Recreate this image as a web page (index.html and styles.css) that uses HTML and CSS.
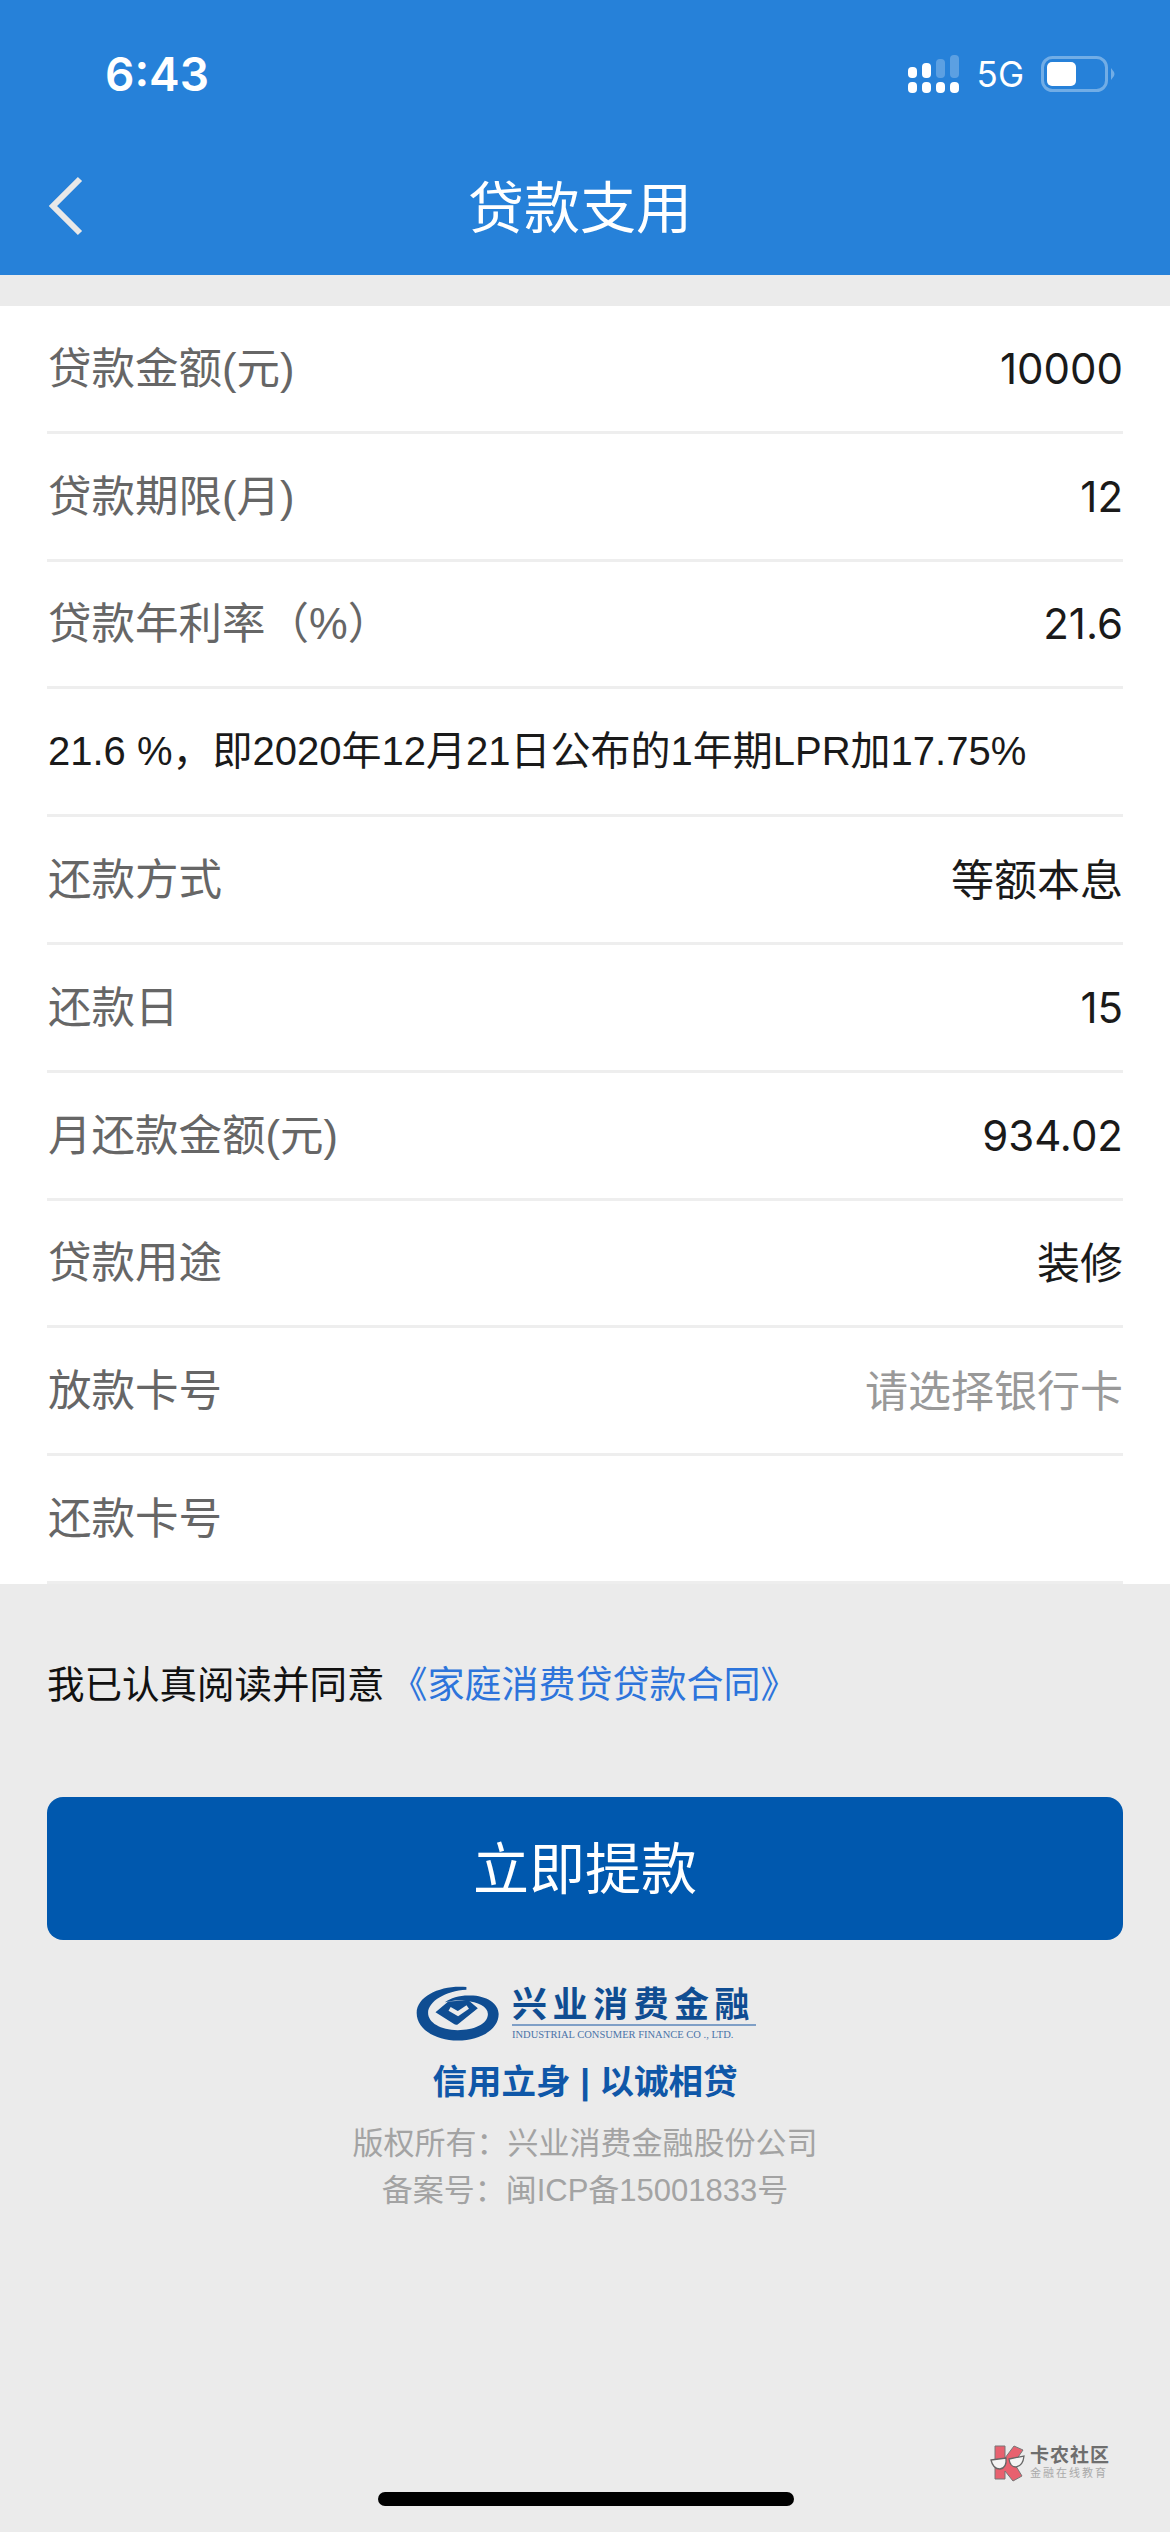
FILE: index.html
```html
<!DOCTYPE html>
<html lang="zh-CN">
<head>
    <meta charset="UTF-8">
    <title>贷款支用</title>
    <link rel="stylesheet" href="styles.css">
</head>
<body>
    <div class="page">
        <div class="header">
            <div class="status-bar">
                <span class="time">6:43</span>
                <div class="status-icons">
                    <svg class="signal" width="52" height="38" viewBox="0 0 52 38">
                        <rect x="0" y="12" width="9" height="11" rx="4" fill="#fff"/>
                        <rect x="14" y="8" width="9" height="15" rx="4" fill="#fff"/>
                        <rect x="28" y="4" width="9" height="19" rx="4" fill="#fff" opacity="0.25"/>
                        <rect x="42" y="0" width="9" height="23" rx="4" fill="#fff" opacity="0.25"/>
                        <rect x="0" y="27" width="9" height="11" rx="4" fill="#fff"/>
                        <rect x="14" y="27" width="9" height="11" rx="4" fill="#fff"/>
                        <rect x="28" y="27" width="9" height="11" rx="4" fill="#fff"/>
                        <rect x="42" y="27" width="9" height="11" rx="4" fill="#fff"/>
                    </svg>
                    <span class="network">5G</span>
                    <svg class="battery" width="74" height="36" viewBox="0 0 74 36">
                        <rect x="1.5" y="1.5" width="64" height="33" rx="10" fill="none" stroke="#fff" stroke-opacity="0.35" stroke-width="3"/>
                        <rect x="6" y="6" width="29" height="24" rx="5" fill="#fff"/>
                        <path d="M70 12 L73 16 Q74 18 73 20 L70 24 Z" fill="#fff" fill-opacity="0.35"/>
                    </svg>
                </div>
            </div>
            <div class="nav-bar">
                <svg class="back" width="36" height="60" viewBox="0 0 36 60">
                    <path d="M33 3 L6 30 L33 57" fill="none" stroke="#e8e8e8" stroke-width="6"/>
                </svg>
                <h1>贷款支用</h1>
            </div>
        </div>

        <div class="form-list">
            <div class="form-row"><span class="label">贷款金额(元)</span><span class="num">10000</span></div>
            <div class="form-row"><span class="label">贷款期限(月)</span><span class="num">12</span></div>
            <div class="form-row"><span class="label">贷款年利率（%）</span><span class="num">21.6</span></div>
            <div class="form-row"><span class="note">21.6 %，即2020年12月21日公布的1年期LPR加17.75%</span></div>
            <div class="form-row"><span class="label">还款方式</span><span class="value">等额本息</span></div>
            <div class="form-row"><span class="label">还款日</span><span class="num">15</span></div>
            <div class="form-row"><span class="label">月还款金额(元)</span><span class="num">934.02</span></div>
            <div class="form-row"><span class="label">贷款用途</span><span class="value">装修</span></div>
            <div class="form-row"><span class="label">放款卡号</span><span class="placeholder">请选择银行卡</span></div>
            <div class="form-row"><span class="label">还款卡号</span></div>
        </div>

        <p class="agreement">我已认真阅读并同意<a class="contract">《家庭消费贷贷款合同》</a></p>

        <button class="submit" type="button"><span>立即提款</span></button>

        <div class="footer">
            <div class="brand">
                <svg class="emblem" width="84" height="56" viewBox="22 22 250 166">
                    <path d="M172 25 C100 18 24 50 24 102 C24 150 80 184 146 184 C215 184 268 150 268 105 C268 72 228 48 178 50 C150 50 125 58 108 70 C130 64 150 64 170 66 C205 68 236 82 236 105 C236 135 195 153 146 153 C95 153 58 130 58 102 C58 68 110 36 172 33 Z" fill="#0f4d92"/>
                    <path d="M80 100 L118 68 L178 64 L206 88 L146 136 Q140 138 134 134 Z" fill="#0f4d92"/>
                    <path d="M122 90 L147 104 L176 84" fill="none" stroke="#ebebeb" stroke-width="13"/>
                </svg>
                <div class="brand-text">
                    <div class="brand-name">兴业消费金融</div>
                    <div class="brand-en">INDUSTRIAL CONSUMER FINANCE CO ., LTD.</div>
                </div>
            </div>
            <div class="slogan">信用立身 | 以诚相贷</div>
            <div class="copyright">版权所有：兴业消费金融股份公司</div>
            <div class="copyright">备案号：闽ICP备15001833号</div>
        </div>

        <div class="watermark">
            <svg width="36" height="38" viewBox="0 0 36 38">
                <path d="M5 2 L15 2 L15 14 L24 2 L33 6 L24 19 L32 32 L23 37 L15 27 L15 35 L5 35 Z" fill="#e8616f" stroke="#777" stroke-width="1"/>
                <path d="M1 16 L16 14 Q17 24 10 25 Q3 25 1 16 Z" fill="#f4f4f4" stroke="#666" stroke-width="1.3"/>
                <path d="M19 15 L34 12 Q33 22 26 23 Q20 23 19 15 Z" fill="#f4f4f4" stroke="#666" stroke-width="1.3"/>
            </svg>
            <div>
                <div class="wm-title">卡农社区</div>
                <div class="wm-sub">金融在线教育</div>
            </div>
        </div>
        <div class="home-indicator"></div>
    </div>
</body>
</html>
```

FILE: styles.css
```css
* {
    box-sizing: border-box;
}
body {
    margin: 0;
    background-color: #ebebeb;
    font-family: "Liberation Sans", "Noto Sans CJK SC", sans-serif;
}
.page {
    position: relative;
    width: 1170px;
    height: 2532px;
    overflow: hidden;
    background-color: #ebebeb;
}
.header {
    height: 275px;
    background-color: #2681d9;
    color: #fff;
}
.status-bar {
    display: flex;
    justify-content: space-between;
    align-items: center;
    height: 148px;
    padding: 0 55px 0 105px;
}
.time {
    font-family: Inter, sans-serif;
    font-size: 46px;
    font-weight: 600;
}
.status-icons {
    display: flex;
    align-items: center;
    gap: 17px;
}
.network {
    font-family: Inter, sans-serif;
    font-size: 35px;
}
.nav-bar {
    position: relative;
    display: flex;
    justify-content: center;
    align-items: center;
    height: 116px;
    padding: 0 10px 6px 0;
}
.nav-bar h1 {
    margin: 0;
    font-size: 56px;
    font-weight: 400;
}
.back {
    position: absolute;
    left: 47px;
    top: 28px;
}
.form-list {
    margin-top: 31px;
    padding: 0 47px;
    background-color: #fff;
}
.form-row {
    display: flex;
    justify-content: space-between;
    align-items: center;
    height: 127.8px;
    border-bottom: 3px solid #eeeeee;
    font-size: 43px;
}
.label {
    padding: 0 0 6px 1px;
    color: #666;
    font-size: 43.5px;
}
.value {
    padding-bottom: 6px;
    color: #1a1a1a;
}
.num {
    color: #1a1a1a;
    font-family: Inter, sans-serif;
    font-size: 42px;
}
.note {
    padding: 0 0 8px 1px;
    color: #1a1a1a;
    font-size: 40px;
}
.placeholder {
    padding-bottom: 6px;
    color: #999;
}
.agreement {
    margin: 73px 0 0;
    padding: 0 47px;
    font-size: 37.5px;
    line-height: 56px;
    color: #111;
}
.contract {
    margin-left: 6px;
    color: #2d74db;
    font-size: 37px;
}
.submit {
    display: block;
    width: 1076px;
    height: 143px;
    margin: 83px 47px 0;
    padding: 0 0 8px;
    border: none;
    border-radius: 16px;
    background-color: #0058ae;
    color: #fff;
    font-family: inherit;
    font-size: 56px;
}
.footer {
    display: flex;
    flex-direction: column;
    align-items: center;
    margin-top: 46px;
}
.brand {
    display: flex;
    align-items: center;
    gap: 12px;
    margin-left: 2px;
}
.brand-name {
    width: 244px;
    height: 38px;
    border-bottom: 2px solid #7f9fc6;
    color: #0f4d92;
    font-size: 35px;
    font-weight: 700;
    line-height: 34px;
    letter-spacing: 5.5px;
    white-space: nowrap;
}
.brand-en {
    margin-top: 3px;
    color: #4a73a8;
    font-family: "Liberation Serif", serif;
    font-size: 10.5px;
    white-space: nowrap;
}
.slogan {
    margin-top: 17px;
    color: #0f57a8;
    font-size: 34.5px;
    font-weight: 700;
    line-height: 46px;
}
.copyright {
    color: #a3a3a3;
    font-size: 31px;
    line-height: 47px;
}
.slogan + .copyright {
    margin-top: 15px;
}
.watermark {
    position: absolute;
    left: 990px;
    top: 2444px;
    display: flex;
    gap: 4px;
}
.wm-title {
    color: #6e6e6e;
    font-size: 19px;
    font-weight: 700;
    line-height: 23px;
    letter-spacing: 1px;
}
.wm-sub {
    color: #aaa;
    font-size: 11px;
    line-height: 13px;
    letter-spacing: 2px;
}
.home-indicator {
    position: absolute;
    left: 378px;
    top: 2492px;
    width: 416px;
    height: 14px;
    border-radius: 7px;
    background-color: #000;
}
```
